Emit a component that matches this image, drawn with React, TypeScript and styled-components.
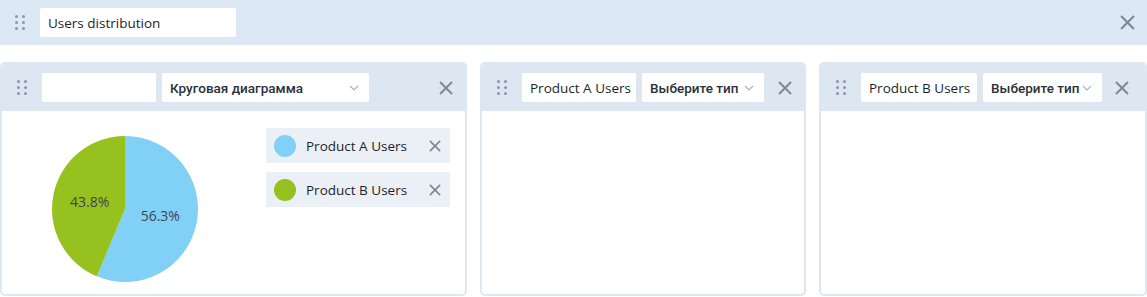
import React from "react";
import styled, { createGlobalStyle } from "styled-components";

const Global = createGlobalStyle`
  html, body { margin: 0; padding: 0; background: #fff; }
  body { font-family: "Open Sans", "Noto Sans", sans-serif; color: #1b1f2a; }
  * { box-sizing: border-box; }
`;

const Page = styled.div`
  width: 1147px;
  height: 297px;
  display: flex;
  flex-direction: column;
`;

const TopBar = styled.div`
  height: 45px;
  background: #dce8f3;
  display: flex;
  align-items: center;
  padding: 0 12px 0 15px;
`;

const Handle = styled.div`
  display: grid;
  grid-template-columns: repeat(2, 3px);
  grid-auto-rows: 3px;
  column-gap: 4px;
  row-gap: 3px;
  width: 12px;
  margin-right: 13px;
  span {
    width: 3px;
    height: 3px;
    border-radius: 50%;
    background: #8a97aa;
  }
`;

const TextBox = styled.div<{ $w: number }>`
  width: ${(p) => p.$w}px;
  height: 29px;
  background: #fff;
  border-radius: 2px;
  display: flex;
  align-items: center;
  padding: 0 8px;
  font-size: 13.5px;
  color: #1b1f2a;
  white-space: nowrap;
  overflow: hidden;
`;

const SelectBox = styled.div<{ $w: number }>`
  width: ${(p) => p.$w}px;
  height: 29px;
  background: #fff;
  border-radius: 2px;
  display: flex;
  align-items: center;
  justify-content: space-between;
  padding: 0 10px 0 8px;
  margin-left: 6px;
  font-family: Roboto, "Open Sans", sans-serif;
  font-size: 13.5px;
  font-weight: 500;
  color: #2b303b;
  white-space: nowrap;
  overflow: hidden;
`;

const Spacer = styled.div`
  flex: 1;
`;

const CloseBtn = styled.div`
  width: 16px;
  height: 16px;
  display: flex;
  align-items: center;
  justify-content: center;
  flex-shrink: 0;
`;

const Row = styled.div`
  display: flex;
  gap: 13px;
  margin-top: 17px;
`;

const Panel = styled.div<{ $w: number }>`
  width: ${(p) => p.$w}px;
  height: 234px;
  border: 2px solid #dce7f2;
  border-radius: 5px;
  display: flex;
  flex-direction: column;
  overflow: hidden;
  flex-shrink: 0;
`;

const PanelHeader = styled.div<{ $pr: number }>`
  height: 47px;
  background: #dce7f2;
  display: flex;
  align-items: center;
  padding: 0 ${(p) => p.$pr}px 0 15px;
  flex-shrink: 0;
`;

const PanelBody = styled.div`
  flex: 1;
  display: flex;
  padding: 23px 15px 0 48px;
`;

const Legend = styled.div`
  margin-left: auto;
  margin-top: -6px;
  width: 184px;
  display: flex;
  flex-direction: column;
  gap: 9px;
`;

const LegendItem = styled.div`
  height: 35px;
  background: #ebf0f7;
  display: flex;
  align-items: center;
  padding: 0 9px 0 8px;
  font-size: 13.5px;
  color: #1b1f2a;
`;

const Swatch = styled.span<{ $c: string }>`
  width: 22px;
  height: 22px;
  border-radius: 50%;
  background: ${(p) => p.$c};
  margin-right: 10px;
  flex-shrink: 0;
`;

const CloseIcon = ({ size = 14 }: { size?: number }) => (
  <svg width={size} height={size} viewBox="0 0 14 14">
    <path d="M1 1L13 13M13 1L1 13" stroke="#7d899b" strokeWidth="2" strokeLinecap="butt" />
  </svg>
);

const Chevron = () => (
  <svg width="10" height="6" viewBox="0 0 10 6">
    <path d="M1 1L5 5L9 1" stroke="#a9b3c1" strokeWidth="1.2" fill="none" />
  </svg>
);

const Dots = () => (
  <Handle>
    {Array.from({ length: 6 }).map((_, i) => (
      <span key={i} />
    ))}
  </Handle>
);

const Pie = () => {
  const cx = 75, cy = 75, r = 73;
  const a = 0.563 * 2 * Math.PI;
  const ex = cx + r * Math.sin(a);
  const ey = cy - r * Math.cos(a);
  const lr = 36;
  const ma = a / 2;
  const mb = a + (2 * Math.PI - a) / 2;
  return (
    <svg width="150" height="150" viewBox="0 0 150 150">
      <path d={`M${cx},${cy} L${cx},${cy - r} A${r},${r} 0 1 1 ${ex},${ey} Z`} fill="#81d0f5" />
      <path d={`M${cx},${cy} L${ex},${ey} A${r},${r} 0 0 1 ${cx},${cy - r} Z`} fill="#97c11f" />
      <text x={cx + lr * Math.sin(ma)} y={cy - lr * Math.cos(ma) + 5} textAnchor="middle" fontSize="14" fill="#3d4550" fontFamily="Open Sans, sans-serif">56.3%</text>
      <text x={cx + lr * Math.sin(mb)} y={cy - lr * Math.cos(mb) + 5} textAnchor="middle" fontSize="14" fill="#3d4550" fontFamily="Open Sans, sans-serif">43.8%</text>
    </svg>
  );
};

export default function App() {
  return (
    <Page>
      <Global />
      <TopBar>
        <Dots />
        <TextBox $w={196}>Users distribution</TextBox>
        <Spacer />
        <CloseBtn><CloseIcon size={15} /></CloseBtn>
      </TopBar>
      <Row>
        <Panel $w={467}>
          <PanelHeader $pr={11}>
            <Dots />
            <TextBox $w={114} />
            <SelectBox $w={207}>Круговая диаграмма<Chevron /></SelectBox>
            <Spacer />
            <CloseBtn><CloseIcon /></CloseBtn>
          </PanelHeader>
          <PanelBody>
            <Pie />
            <Legend>
              <LegendItem><Swatch $c="#81d0f5" />Product A Users<Spacer /><CloseIcon size={12} /></LegendItem>
              <LegendItem><Swatch $c="#97c11f" />Product B Users<Spacer /><CloseIcon size={12} /></LegendItem>
            </Legend>
          </PanelBody>
        </Panel>
        <Panel $w={326}>
          <PanelHeader $pr={11}>
            <Dots />
            <TextBox $w={114}>Product A Users</TextBox>
            <SelectBox $w={122}>Выберите тип<Chevron /></SelectBox>
            <Spacer />
            <CloseBtn><CloseIcon /></CloseBtn>
          </PanelHeader>
        </Panel>
        <Panel $w={328}>
          <PanelHeader $pr={15}>
            <Dots />
            <TextBox $w={116}>Product B Users</TextBox>
            <SelectBox $w={119}>Выберите тип<Chevron /></SelectBox>
            <Spacer />
            <CloseBtn><CloseIcon /></CloseBtn>
          </PanelHeader>
        </Panel>
      </Row>
    </Page>
  );
}
